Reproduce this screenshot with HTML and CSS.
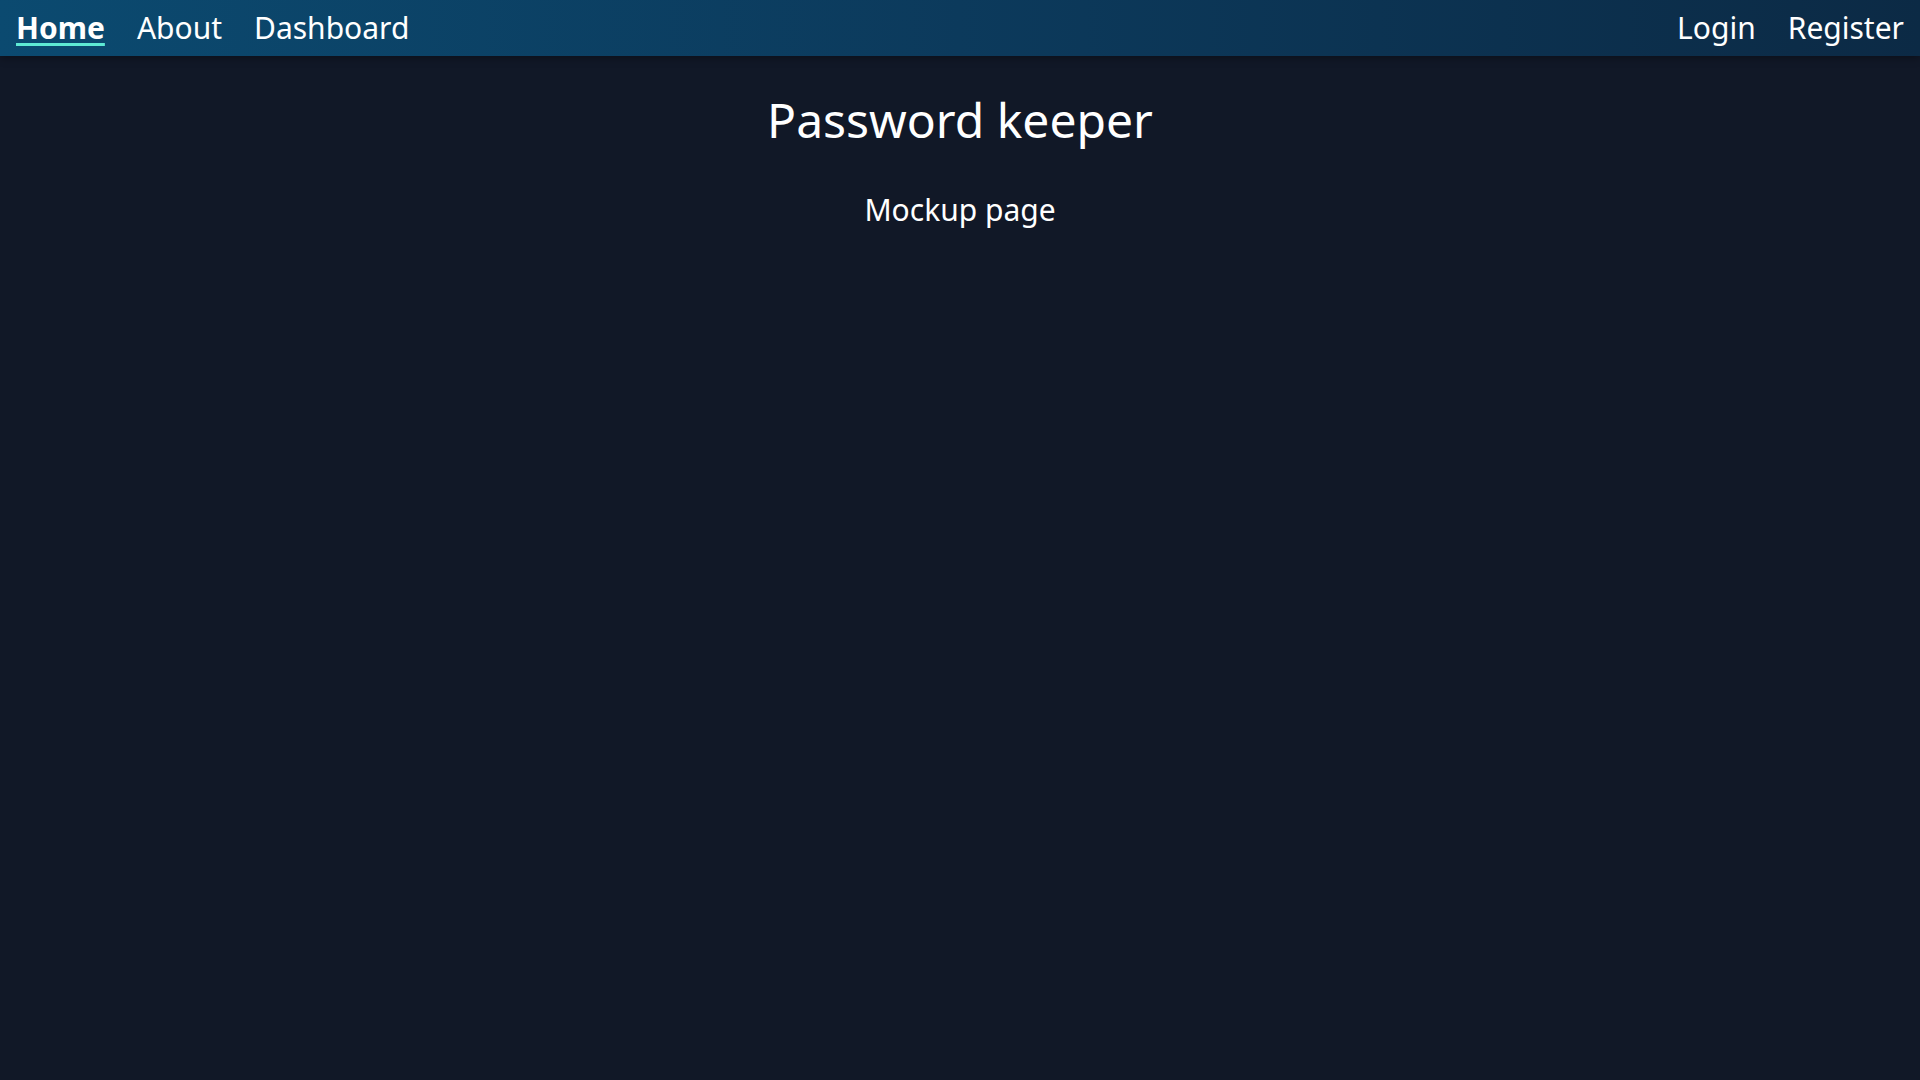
FILE: index.html
```html
<!DOCTYPE html>
<html lang="en">
<head>
<meta charset="utf-8">
<title>Password keeper</title>
<link rel="stylesheet" href="styles.css">
</head>
<body>
<nav class="navbar">
  <div class="nav-group">
    <a class="nav-link active" href="#">Home</a>
    <a class="nav-link" href="#">About</a>
    <a class="nav-link" href="#">Dashboard</a>
  </div>
  <div class="nav-group">
    <a class="nav-link" href="#">Login</a>
    <a class="nav-link" href="#">Register</a>
  </div>
</nav>
<main class="content">
  <h1 class="title">Password keeper</h1>
  <p class="subtitle">Mockup page</p>
</main>
</body>
</html>
```
FILE: styles.css
```css
html, body {
  margin: 0;
  padding: 0;
  height: 100%;
}
body {
  background: #111827;
  color: #ffffff;
  font-family: "Noto Sans", sans-serif;
}
.navbar {
  height: 56px;
  display: flex;
  justify-content: space-between;
  align-items: center;
  padding: 0 16px;
  background: linear-gradient(90deg, #0b4a70 0%, #0c3a5c 50%, #0c2a45 100%);
  box-shadow: 0 2px 8px rgba(0, 0, 0, 0.35);
}
.nav-group {
  display: flex;
  gap: 32px;
}
.nav-link {
  color: #ffffff;
  text-decoration: none;
  font-size: 30px;
  line-height: 40px;
}
.nav-link.active {
  font-weight: 700;
  text-decoration: underline;
  text-decoration-color: #5eead4;
  text-decoration-thickness: 3px;
  text-underline-offset: 4px;
}
.content {
  text-align: center;
}
.title {
  font-size: 48px;
  font-weight: 400;
  margin: 0;
  padding-top: 28px;
  line-height: 72px;
}
.subtitle {
  font-size: 30px;
  line-height: 41px;
  margin: 33px 0 0;
}
```
